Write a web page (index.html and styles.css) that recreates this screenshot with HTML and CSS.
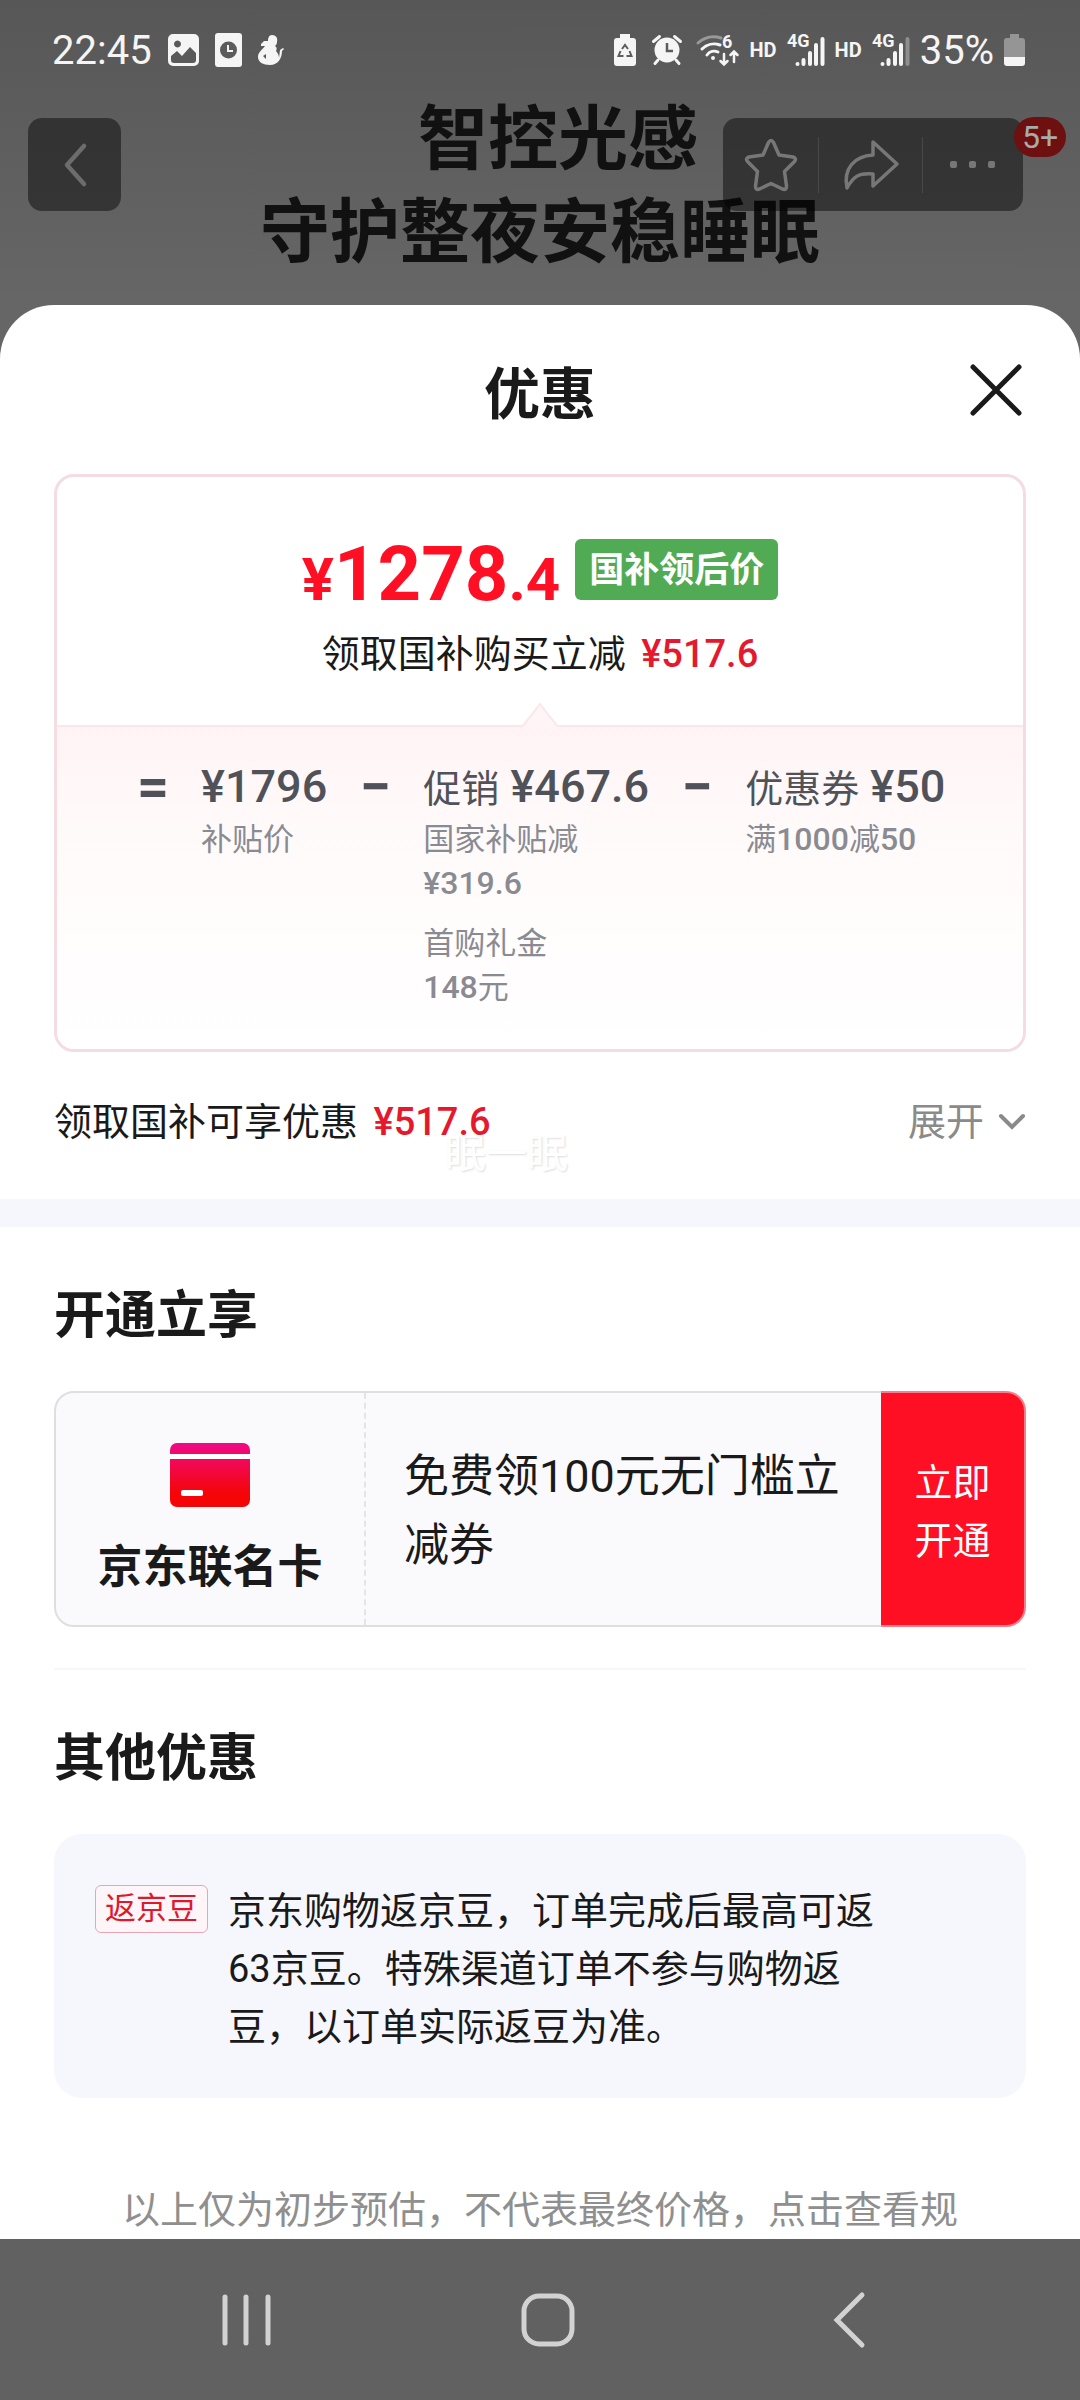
FILE: index.html
```html
<!DOCTYPE html>
<html lang="zh-CN">
<head>
<meta charset="utf-8">
<meta name="viewport" content="width=device-width, initial-scale=1">
<title>优惠</title>
<link rel="stylesheet" href="styles.css">
</head>
<body>
<div class="screen">
  <header class="hero">
    <p class="hero-title"><span class="lead">智控光感</span><br>守护整夜安稳睡眠</p>
    <div class="status">
      <div class="status-group status-left">
        <span class="clock">22:45</span>
        <svg width="31" height="32" viewBox="0 0 31 32"><path fill="#f5f5f5" fill-rule="evenodd" d="M5 0h21a5 5 0 0 1 5 5v22a5 5 0 0 1-5 5H5a5 5 0 0 1-5-5V5a5 5 0 0 1 5-5zM9.500 6.500a3.500 3.500 0 1 0 .01 0zM3 22v4q0 3 3 3h19q3 0 3-3v-7l-6-6-8 9-5-5z"/></svg>
        <svg width="27" height="34" viewBox="0 0 27 34"><rect width="27" height="34" rx="3" fill="#f5f5f5"/><circle cx="13.500" cy="17" r="8.500" fill="#5c5c5c"/><path d="M13 12v6h5" fill="none" stroke="#f5f5f5" stroke-width="2"/></svg>
        <svg width="26" height="30" viewBox="0 0 26 30"><path fill="#f5f5f5" fill-rule="evenodd" d="M14 0c4 0 6 3 5 7 0 2-1 3-2 4 2 1 2 3 1 5 2 2 3 5 3 7l1-8 3-2 1 1-2 2c0 7-4 14-12 14C5 30 0 27 0 22c0-5 4-7 7-11l-4 0 0-2 3-3 4 0C10 3 11 0 14 0zM5 21l3 3 0-5z"/></svg>
      </div>
      <div class="status-group">
        <svg class="saver" width="22" height="32" viewBox="0 0 22 32"><path fill="#f5f5f5" d="M6 0h10v4h3a3 3 0 0 1 3 3v22a3 3 0 0 1-3 3H3a3 3 0 0 1-3-3V7a3 3 0 0 1 3-3h3z"/><path d="M8 15l3-4 3 4M15.500 17l2 5h-5M9.500 22h-5l2-5" fill="none" stroke="#5c5c5c" stroke-width="2"/></svg>
        <svg class="alarm" width="30" height="30" viewBox="0 0 30 30"><circle cx="15" cy="15" r="12.500" fill="#f5f5f5"/><path d="M1.500 6.500l6-5M28.500 6.500l-6-5M6 25l-3 3.500M24 25l3 3.500" stroke="#f5f5f5" stroke-width="3" stroke-linecap="round"/><path d="M15 8v8h6" fill="none" stroke="#5c5c5c" stroke-width="2.500"/></svg>
        <svg width="43" height="32" viewBox="0 0 43 32"><g fill="none" stroke="#f5f5f5" stroke-width="3" stroke-linecap="round"><path stroke="#999" d="M2 9A24 24 0 0 1 25 4"/><path d="M6 15A17 17 0 0 1 24 11"/><path d="M11 21A9 9 0 0 1 22 18"/><path stroke-width="2.500" d="M28 20v10M24.500 27l3.500 3.500 3.500-3.500M38 28V18M34.500 21l3.500-3.500 3.500 3.500"/></g><circle cx="17" cy="24" r="2" fill="#f5f5f5"/><text class="mark" x="26" y="14">6</text></svg>
        <span class="hd">HD</span>
        <svg width="38" height="34" viewBox="0 0 38 34"><text class="mark" x="0" y="14">4G</text><g stroke="#f5f5f5" stroke-width="4" stroke-linecap="round"><path d="M10.500 31v.01M16.500 31v-4M23 31V20M29 31V12M35.500 31V6"/></g></svg>
        <span class="hd">HD</span>
        <svg width="38" height="34" viewBox="0 0 38 34"><text class="mark" x="0" y="14">4G</text><g stroke="#f5f5f5" stroke-width="4" stroke-linecap="round"><path d="M10.500 31v.01M16.500 31v-4M23 31V20M29 31V12"/><path stroke="#8e8e8e" d="M35.500 31V6"/></g></svg>
        <span class="clock">35%</span>
        <svg width="21" height="32" viewBox="0 0 21 32"><path fill="#959595" d="M6 0h9v4h3a3 3 0 0 1 3 3v16H0V7a3 3 0 0 1 3-3h3z"/><path fill="#f5f5f5" d="M0 23h21v6a3 3 0 0 1-3 3H3a3 3 0 0 1-3-3z"/></svg>
      </div>
    </div>
    <div class="toolbar">
      <button class="tool-box back" aria-label="返回"><svg width="24" height="44" viewBox="0 0 24 44"><path d="M21 3L4 22l17 19" fill="none" stroke="#6c6c6c" stroke-width="4.500" stroke-linecap="round" stroke-linejoin="round"/></svg></button>
      <div class="tool-box actions">
        <button class="action" aria-label="收藏"><svg width="52" height="54" viewBox="0 0 52 54"><path d="M23.500 4.500q2.500-4 5 0l5.500 12.500 14 2q4 1.500 1.500 4.500L39.500 33.500l2 14.500q0 4.500-4 3L26 45.500 14.500 51q-4 1.500-4-3l2-14.500L2.500 23.500Q0 20.500 4 19l14-2z" fill="none" stroke="#777" stroke-width="3.500" stroke-linejoin="round"/></svg></button>
        <button class="action" aria-label="分享"><svg width="56" height="52" viewBox="0 0 56 52"><path d="M30 3l24 22-24 22V35C17 34 11 36 4 49 0 30 11 17 30 16z" fill="none" stroke="#777" stroke-width="3.500" stroke-linejoin="round"/></svg></button>
        <button class="action" aria-label="更多"><svg width="46" height="8" viewBox="0 0 46 8"><g fill="#777"><rect width="7" height="7" rx="2"/><rect x="19" width="7" height="7" rx="2"/><rect x="38" width="7" height="7" rx="2"/></g></svg></button>
        <span class="count">5+</span>
      </div>
    </div>
  </header>

  <main class="sheet">
    <div class="sheet-head">
      <h1>优惠</h1>
      <button class="close" aria-label="关闭"><svg width="54" height="54" viewBox="0 0 54 54"><path d="M4 4l46 46M50 4L4 50" stroke="#1a1a1a" stroke-width="5" stroke-linecap="round"/></svg></button>
    </div>

    <section class="price-card">
      <div class="final">
        <div class="final-row">
          <span class="price"><small>¥</small>1278<small>.4</small></span>
          <span class="badge">国补领后价</span>
        </div>
        <p class="line">领取国补购买立减 <b>¥517.6</b></p>
      </div>
      <div class="formula">
        <svg class="notch" width="38" height="26" viewBox="0 0 38 26"><path d="M1 25L19 2l18 23" fill="#fff5f7" stroke="#fce6eb" stroke-width="2"/></svg>
        <span class="op">=</span>
        <div class="term"><p class="amount">¥1796</p><p class="note">补贴价</p></div>
        <span class="op">−</span>
        <div class="term"><p class="amount"><span>促销</span> ¥467.6</p><p class="note">国家补贴减<br><b>¥319.6</b></p><p class="note">首购礼金<br><b>148</b>元</p></div>
        <span class="op">−</span>
        <div class="term"><p class="amount"><span>优惠券</span> ¥50</p><p class="note">满<b>1000</b>减<b>50</b></p></div>
      </div>
    </section>

    <div class="summary">
      <p class="line">领取国补可享优惠 <b>¥517.6</b></p>
      <button class="expand">展开<svg width="28" height="18" viewBox="0 0 28 18"><path d="M3 3l11 11L25 3" fill="none" stroke="#8a8a8a" stroke-width="4" stroke-linecap="round"/></svg></button>
      <span class="watermark">眠一眠</span>
    </div>

    <section class="block first">
      <h2>开通立享</h2>
      <div class="coupon">
        <div class="brand">
          <svg width="80" height="64" viewBox="0 0 80 64"><defs><linearGradient id="card" x1="0" y1="0" x2="0" y2="1"><stop offset="0" stop-color="#f00a86"/><stop offset=".8" stop-color="#f50505"/></linearGradient></defs><rect width="80" height="64" rx="7" fill="url(#card)"/><path fill="#fff" d="M0 11h80v5H0z"/><rect x="11" y="47" width="22" height="6" rx="2" fill="#fff"/></svg>
          <strong>京东联名卡</strong>
        </div>
        <p class="offer">免费领100元无门槛立减券</p>
        <button class="open">立即<br>开通</button>
      </div>
    </section>

    <section class="block second">
      <h2>其他优惠</h2>
      <div class="beans">
        <span class="tag">返京豆</span>
        <p>京东购物返京豆，订单完成后最高可返63京豆。特殊渠道订单不参与购物返豆，以订单实际返豆为准。</p>
      </div>
    </section>
    <p class="disclaimer">以上仅为初步预估，不代表最终价格，点击查看规</p>
  </main>

  <nav class="nav">
    <button aria-label="最近任务"><svg width="54" height="54" viewBox="0 0 54 54"><path d="M5 4v46M26 4v46M48 4v46" stroke="#d2d2d2" stroke-width="5" stroke-linecap="round"/></svg></button>
    <button aria-label="主屏幕"><svg width="54" height="54" viewBox="0 0 54 54"><rect x="3" y="3" width="48" height="48" rx="15" fill="none" stroke="#d2d2d2" stroke-width="5"/></svg></button>
    <button aria-label="返回"><svg width="34" height="56" viewBox="0 0 34 56"><path d="M30 3L5 28l25 25" fill="none" stroke="#d2d2d2" stroke-width="5" stroke-linecap="round"/></svg></button>
  </nav>
</div>
</body>
</html>
```

FILE: styles.css
```css
* { box-sizing: border-box; }
body, h1, h2, p { margin: 0; }
body {
  background: linear-gradient(#575757, #666 300px);
  color: #1a1a1a;
  font-family: Roboto, "Noto Sans CJK SC", sans-serif;
  font-size: 38px;
}
svg { display: block; flex: none; overflow: visible; }
button {
  display: grid;
  place-items: center;
  margin: 0;
  padding: 0;
  border: 0;
  background: none;
  color: inherit;
  font: inherit;
}
.screen { display: flex; flex-direction: column; min-height: 100vh; }

/* Dimmed product page behind the sheet */
.hero { position: relative; height: 305px; }
.hero-title {
  position: absolute;
  top: 94px;
  left: 0;
  right: 0;
  color: #111;
  font-size: 70px;
  font-weight: 700;
  line-height: 93px;
  text-align: center;
}
.lead { padding-left: 36px; }
.status {
  display: flex;
  justify-content: space-between;
  height: 100px;
  padding: 0 55px 0 52px;
}
.status-group { display: flex; align-items: center; gap: 10px; }
.status-left { gap: 16px; }
.saver { margin-right: 6px; }
.alarm { margin-right: 4px; }
.clock { color: #f5f5f5; font-size: 40px; }
.hd { color: #f5f5f5; font-size: 20px; font-weight: 700; }
.mark { fill: #f5f5f5; font-size: 18px; font-weight: 700; }
.toolbar {
  position: relative;
  display: flex;
  justify-content: space-between;
  padding: 18px 57px 0 28px;
}
.tool-box { height: 93px; border-radius: 14px; background: rgba(0, 0, 0, .45); }
.back { width: 93px; }
.actions {
  position: relative;
  display: grid;
  grid-template-columns: 95px 104px 101px;
  align-items: center;
}
.action { height: 56px; }
.action + .action { border-left: 1px solid #484848; }
.count {
  position: absolute;
  top: -1px;
  right: -43px;
  width: 52px;
  border-radius: 20px;
  background: #6e1010;
  color: #aaa;
  font-size: 32px;
  line-height: 40px;
  text-align: center;
}

/* Bottom sheet */
.sheet { flex: 1; border-radius: 54px 54px 0 0; background: #fff; }
.sheet-head {
  position: relative;
  display: grid;
  place-items: center;
  height: 169px;
}
h1 { font-size: 56px; font-weight: 700; }
.close { position: absolute; top: 58px; right: 57px; }

.price-card {
  margin: 0 54px;
  border: 3px solid #f5dce3;
  border-radius: 20px;
}
.final { padding: 62px 0 43px; }
.final-row { display: flex; justify-content: center; gap: 15px; margin-bottom: 16px; }
.price { color: #ff0f23; font-size: 76px; font-weight: 700; line-height: 70px; }
.price small { font-size: 60px; line-height: 1; }
.badge {
  height: 61px;
  padding: 0 14px;
  border-radius: 6px;
  background: #51ab55;
  color: #fff;
  font-size: 35px;
  font-weight: 700;
  line-height: 64px;
}
.line { line-height: 56px; text-align: center; }
.line b { margin-left: 6px; color: #e5182d; font-weight: 500; }
.formula {
  position: relative;
  display: flex;
  gap: 34px;
  padding: 32px 0 39px 82px;
  border-top: 2px solid #fce6eb;
  border-radius: 0 0 17px 17px;
  background: linear-gradient(#fff3f6, #fffafa 30%, #fff);
}
.notch { position: absolute; top: -25px; left: calc(50% - 19px); }
.op, .amount { color: #505259; font-size: 45px; font-weight: 500; line-height: 56px; white-space: nowrap; }
.op { display: flex; justify-content: center; width: 28px; font-size: 56px; font-weight: 700; }
.amount span { font-size: 38px; font-weight: 400; line-height: 1; }
.note { margin-top: 3px; color: #8a8b92; font-size: 31px; line-height: 44px; }
.note b { font-size: 32px; font-weight: 500; line-height: 1; }
.note + .note { margin-top: 16px; }

.summary {
  position: relative;
  display: flex;
  justify-content: space-between;
  padding: 42px 54px 49px;
}
.expand { display: flex; align-items: center; gap: 14px; color: #8a8a8a; line-height: 56px; }
.watermark {
  position: absolute;
  top: 68px;
  left: 445px;
  color: #fff;
  font-size: 41px;
  text-shadow: 1px 1px 2px #ddd;
}

.block { margin: 0 54px; padding-top: 51px; }
.first { margin: 0; padding: 51px 54px 0; border-top: 28px solid #f6f7fc; }
.second { margin-top: 41px; border-top: 2px solid #f7f7f9; }
h2 { margin-bottom: 37px; font-size: 51px; font-weight: 700; line-height: 76px; }
.coupon {
  display: flex;
  border: 2px solid #dedfe2;
  border-radius: 20px;
  background: #fafafd;
}
.brand {
  display: flex;
  flex-direction: column;
  align-items: center;
  gap: 28px;
  width: 310px;
  padding: 50px 0 24px;
  border-right: 2px dashed #e4e4e8;
}
.brand strong { font-size: 45px; font-weight: 700; line-height: 66px; }
.offer { flex: 1; padding: 49px 20px 0 38px; font-size: 45px; line-height: 69px; }
.open {
  width: 145px;
  margin: -2px -2px -2px 0;
  border: 2px solid #f77f8b;
  border-left: 0;
  border-radius: 0 20px 20px 0;
  background: #ff0f23;
  color: #fff;
  line-height: 58px;
  padding-top: 6px;
}
.beans {
  display: flex;
  align-items: flex-start;
  gap: 20px;
  padding: 48px 140px 42px 41px;
  border-radius: 28px;
  background: #f6f7fc;
}
.tag {
  flex: none;
  margin-top: 3px;
  padding: 0 9px;
  border: 1px solid #eba5b2;
  border-radius: 6px;
  color: #e0182d;
  background: #fdf5f8;
  font-size: 31px;
  line-height: 46px;
}
.beans p { line-height: 58px; }
.disclaimer { margin-top: 83px; color: #8f8f8f; line-height: 58px; text-align: center; }

.nav {
  display: grid;
  grid-template-columns: repeat(3, 1fr);
  height: 162px;
  padding: 0 80px 0 96px;
  background: #616161;
}
```
